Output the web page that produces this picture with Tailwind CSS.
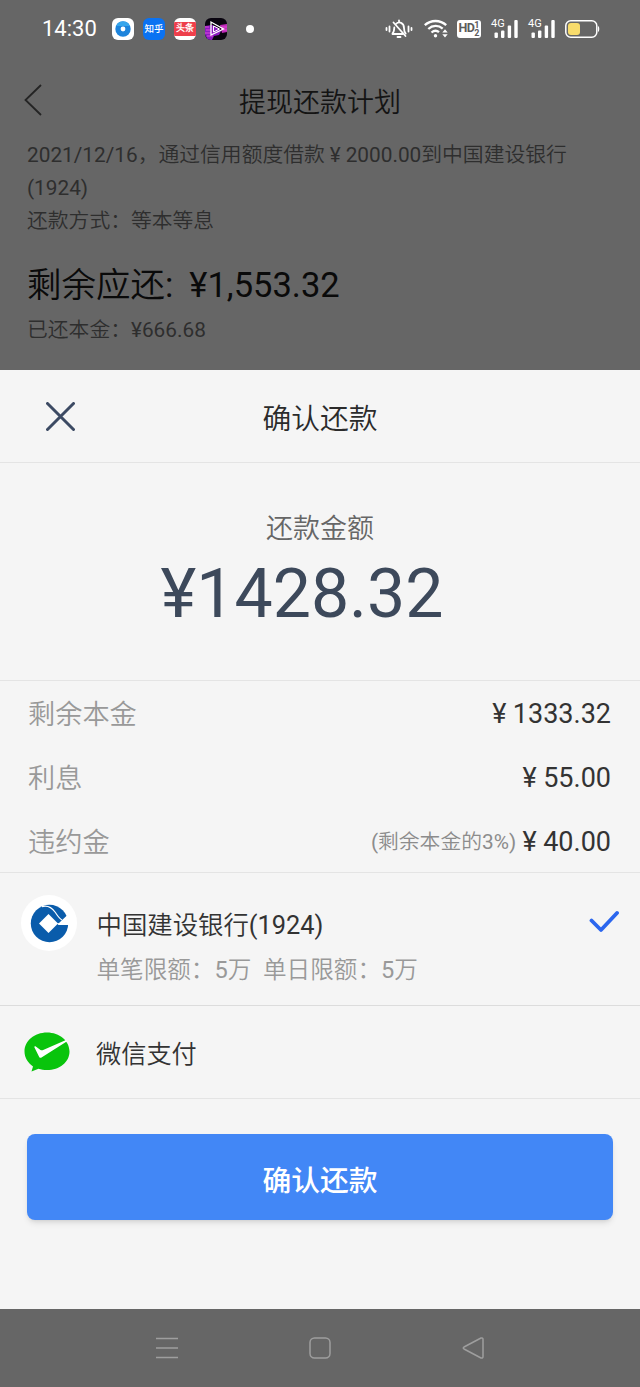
<!DOCTYPE html>
<html lang="zh-CN">
<head>
  <meta charset="UTF-8">
  <title>提现还款计划</title>
  <meta name="viewport" content="width=device-width, initial-scale=1.0">
  <script src="https://cdn.jsdelivr.net/npm/@tailwindcss/browser@4"></script>
</head>
<body class="bg-[#666666] min-h-screen font-['Roboto','Noto_Sans_CJK_SC_DemiLight','Noto_Sans_CJK_SC',sans-serif]">
  <div class="w-[640px] h-[1387px] flex flex-col overflow-hidden">

    <!-- status bar -->
    <div class="h-[57px] pl-[42px] pr-10 flex items-center justify-between text-white">
      <div class="flex items-center">
        <span class="text-[22px] w-[70px]">14:30</span>
        <div class="flex items-center gap-[9px]">
          <svg class="size-[22px]" viewBox="0 0 22 22"><rect width="22" height="22" rx="6" fill="#fff"/><circle cx="11" cy="11" r="7.7" fill="#1d84dc"/><path d="M4 8a7.7 7.7 0 0 1 14 0z" fill="#35a5ec"/><circle cx="11" cy="11" r="2.4" fill="#fff"/></svg>
          <div class="size-[22px] rounded-md bg-[#0a72f2] font-['Noto_Sans_CJK_SC',sans-serif] text-[9.500px] font-medium flex items-center justify-center whitespace-nowrap">知乎</div>
          <div class="size-[22px] rounded-md bg-white overflow-hidden flex items-center">
            <div class="w-full h-[14px] pt-px bg-[#ee3f4b] text-[9px] font-bold flex items-center justify-center whitespace-nowrap">头条</div>
          </div>
          <svg class="size-[22px] rounded-md" viewBox="0 0 22 22"><rect width="22" height="22" fill="#09040f"/><path d="M0 8l7-1 5 2 4 4-2 4-5 1-2 4H3l-3-5z" fill="#8b1bc0"/><path d="M15 7l7-1v8l-5 1z" fill="#c02ab8"/><path d="M0 9h4M1 12h5M0 15h6M2 18h6M17 9h5M18 12h4" stroke="#e04bd8"/><path d="M6 4v13l12.500-6z" fill="none" stroke="#fff" stroke-width="1.300"/><path d="M8.500 8v6l6-3z" fill="none" stroke="#fff"/></svg>
        </div>
        <span class="ml-[19px] size-2 rounded-full bg-white"></span>
      </div>
      <div class="flex items-center">
        <!-- muted bell -->
        <svg class="w-7 h-5 mr-[11px]" viewBox="0 0 28 20" fill="none" stroke="#fff" stroke-width="1.800" stroke-linecap="round"><path d="M7.500 14.500c1.600-1.500 1.700-3 1.800-6M11 5c2.800-3 8-1.500 8 4 0 2.600.3 4 1.700 5.500M7.500 15h10M14 1.500v1M12.500 18h3M8.500 3.500l12 13.500M4.500 7.500v5M1.500 9v2M23.500 7.500v5M26.500 9v2"/></svg>
        <!-- wifi -->
        <svg class="w-6 h-5 mr-[9px]" viewBox="0 0 24 20" fill="none" stroke="#fff" stroke-width="2.300"><path d="M.8 6.200c6-5.600 15.400-5.600 21.400 0M4.300 10c4.300-4 10.200-4 14.400-.3M7.500 13.500c2.400-2.100 5.500-2.100 7.500-.3"/><circle cx="11.500" cy="16.800" r="1.700" fill="#fff" stroke="none"/><path d="M18.300 13.500l2.700-3.200 2.700 3.200zM18.300 15.200l2.700 3.200 2.700-3.200z" fill="#fff" stroke="none"/></svg>
        <div class="w-6 h-[18px] mr-[10px] rounded-[3px] bg-white text-[#5c5c5c] flex items-center justify-center font-bold">
          <span class="text-[12.500px] tracking-tighter">HD</span>
          <span class="text-[9px] leading-[8px] flex flex-col"><span>1</span><span>2</span></span>
        </div>
        <div class="relative w-[27px] h-5 mr-[10px]">
          <span class="absolute left-0 top-0 text-[11px] leading-[10px]">4G</span>
          <svg class="w-[27px] h-5" viewBox="0 0 27 20" fill="#fff"><rect x="3.500" y="13.500" width="3.400" height="5.500" rx="1"/><rect x="10" y="11.500" width="3.400" height="7.500" rx="1"/><rect x="16.700" y="6.500" width="3.400" height="12.500" rx="1"/><rect x="23.300" y="1" width="3.400" height="18" rx="1"/></svg>
        </div>
        <div class="relative w-[27px] h-5 mr-[10px]">
          <span class="absolute left-0 top-0 text-[11px] leading-[10px]">4G</span>
          <svg class="w-[27px] h-5" viewBox="0 0 27 20" fill="#fff"><rect x="3.500" y="13.500" width="3.400" height="5.500" rx="1"/><rect x="10" y="11.500" width="3.400" height="7.500" rx="1"/><rect x="16.700" y="6.500" width="3.400" height="12.500" rx="1"/><rect x="23.300" y="1" width="3.400" height="18" rx="1"/></svg>
        </div>
        <!-- battery -->
        <svg class="w-[35px] h-[18px]" viewBox="0 0 35 18"><rect x=".8" y=".8" width="31" height="16.400" rx="5" fill="none" stroke="#fff" stroke-width="1.500"/><rect x="3" y="3" width="12" height="12" rx="3" fill="#f8dc6c"/><path d="M33 6c1.700.5 1.700 5.500 0 6z" fill="#fff"/></svg>
      </div>
    </div>

    <!-- page behind the sheet -->
    <header class="h-[82px] pt-1 pl-6 flex items-center">
      <svg class="w-[18px] h-8" viewBox="0 0 18 32" fill="none" stroke="#242424" stroke-width="1.800"><path d="M17 1L1.500 16 17 31"/></svg>
      <h1 class="flex-1 pr-[42px] pt-1.5 text-center text-[27px] leading-none text-[#141414]">提现还款计划</h1>
    </header>
    <section class="h-[231px] px-[27px] text-[20.800px] leading-[32.600px] text-[#2e2e2e]">
      <p>2021/12/16，通过信用额度借款<span class="inline-block w-[1em] text-center">¥</span>2000.00到中国建设银行<br>(1924)</p>
      <p class="pt-px">还款方式：等本等息</p>
      <p class="mt-6 h-[46px] text-[34.500px] leading-[46px] text-[#0a0a0a]">剩余应还:<span class="ml-4">¥1,553.32</span></p>
      <p class="mt-1.5">已还本金：¥666.68</p>
    </section>

    <!-- repayment sheet -->
    <main class="h-[939px] bg-[#f5f5f5]">
      <div class="h-[93px] pl-[46px] flex items-center border-b border-[#e4e4e4]">
        <svg class="size-[29px]" viewBox="0 0 29 29" fill="none" stroke="#3c4a63" stroke-width="3" stroke-linecap="round"><path d="M1.500 1.500l26 26M27.500 1.500l-26 26"/></svg>
        <h2 class="flex-1 pr-[75px] pt-1.5 text-center text-[28.800px] leading-none text-[#2b2b2b]">确认还款</h2>
      </div>
      <div class="h-[218px] pt-12 text-center border-b border-[#e4e4e4]">
        <p class="text-[27px] leading-9 text-[#666]">还款金额</p>
        <p class="mt-[7px] pr-9 text-[68px] leading-[80px] text-[#3d495b]">¥1428.32</p>
      </div>
      <div class="h-[192px] pl-7 pr-[29px] border-b border-[#e4e4e4] text-[27px] leading-[66px]">
        <div class="h-16 flex justify-between">
          <span class="pt-px text-[27.200px] text-[#999]">剩余本金</span>
          <span class="text-[#333]"><span class="inline-block w-[1em] text-center">¥</span>1333.32</span>
        </div>
        <div class="h-16 flex justify-between">
          <span class="pt-px text-[27.200px] text-[#999]">利息</span>
          <span class="text-[#333]"><span class="inline-block w-[1em] text-center">¥</span>55.00</span>
        </div>
        <div class="h-16 flex justify-between">
          <span class="pt-px text-[27.200px] text-[#999]">违约金</span>
          <span class="flex text-[#333]"><span class="text-[20.800px] text-[#8c8c8c]">(剩余本金的3%)</span><span class="inline-block w-[1em] text-center">¥</span>40.00</span>
        </div>
      </div>
      <div class="h-[133px] pl-[21px] pr-[21px] pt-[22px] flex border-b border-[#dcdcdc]">
        <div class="size-14 rounded-full bg-white flex items-center justify-center">
          <svg class="size-[39px]" viewBox="0 0 39 39"><circle cx="19.500" cy="19.500" r="18.700" fill="#0a5cab"/><path d="M18.500 10l9.500 9.500-9.500 9.500L9 19.500z" fill="#fff"/><path d="M39 9.500l-10 9.500-2 .5 1.500 1.500H39z" fill="#fff"/><path d="M12 2.600c6-1.600 9.500.5 13 5.400 2.300 3.200 4 6.500 7 8" fill="none" stroke="#fff" stroke-width="1.200"/></svg>
        </div>
        <div class="flex-1 pt-px pl-[19.500px]">
          <p class="text-[25.400px] leading-[58px] text-[#333]">中国建设银行(1924)</p>
          <p class="pt-px text-[23.600px] leading-[30px] text-[#999] whitespace-pre">单笔限额：5万  单日限额：5万</p>
        </div>
        <svg class="mt-[15px] w-[30px] h-[23px]" viewBox="0 0 30 23" fill="none" stroke="#2b66ee" stroke-width="3.800" stroke-linecap="round" stroke-linejoin="round"><path d="M2.500 10.500l9.500 9.500L28 3"/></svg>
      </div>
      <div class="h-[93px] pl-6 flex items-center border-b border-[#e4e4e4]">
        <svg class="w-[46px] h-10" viewBox="0 0 46 40"><path d="M23 .5C10.500.5.500 8.800.5 19.500c0 6.200 3.500 11.500 8.500 15L7.500 39.500l7-2.800c2.600.9 5.500 1.400 8.500 1.400 12.500 0 22.500-8 22.500-18.600S35.500.500 23 .500z" fill="#09c40c"/><path d="M43.500 9L17.500 25.500c-.8.500-1.800.3-2.300-.6L10.500 15.500c-.4-.8.500-1.500 1.300-1L16.500 18c.6.400 1.400.5 2.100.2L42 8z" fill="#fff"/></svg>
        <span class="pt-1.5 pl-[26px] text-[25.200px] text-[#333]">微信支付</span>
      </div>
      <div class="pt-[35px] px-[27px]">
        <button class="w-full h-[86px] pt-1 rounded-lg bg-[#4287f6] text-white font-['Noto_Sans_CJK_SC',sans-serif] text-[28.800px] leading-none font-medium shadow-md">确认还款</button>
      </div>
    </main>

    <!-- navigation bar -->
    <nav class="flex-1 pl-[155px] pr-[155px] flex items-center justify-between">
      <svg class="size-6" viewBox="0 0 24 24" fill="none" stroke="#9e9e9e" stroke-width="1.600"><path d="M1 2.500h22M1 12h22M1 21.500h22"/></svg>
      <svg class="size-6" viewBox="0 0 24 24" fill="none" stroke="#9e9e9e" stroke-width="1.500"><rect x="2" y="2" width="20" height="20" rx="4.500"/></svg>
      <svg class="size-6" viewBox="0 0 24 24" fill="none" stroke="#9e9e9e" stroke-width="1.500" stroke-linejoin="round"><path d="M3 11l17-9q2-.5 2 1.500v17q0 2-2 1.500L3 13q-1.500-1 0-2z"/></svg>
    </nav>
  </div>
</body>
</html>
